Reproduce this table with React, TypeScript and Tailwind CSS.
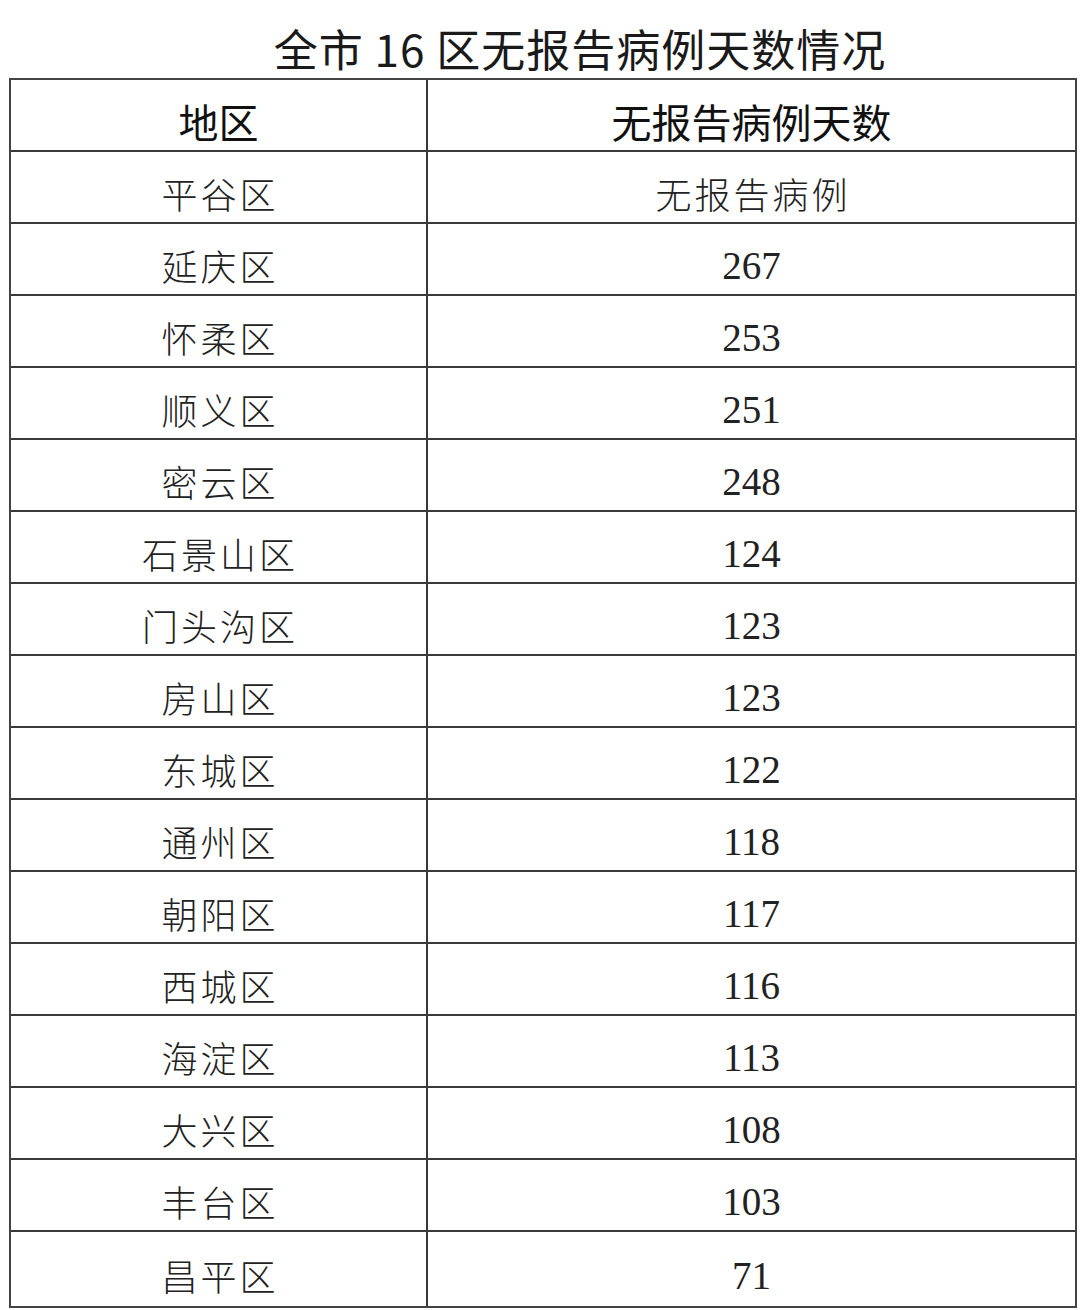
const rows: { district: string; days: string }[] = [
	{ district: "平谷区", days: "无报告病例" },
	{ district: "延庆区", days: "267" },
	{ district: "怀柔区", days: "253" },
	{ district: "顺义区", days: "251" },
	{ district: "密云区", days: "248" },
	{ district: "石景山区", days: "124" },
	{ district: "门头沟区", days: "123" },
	{ district: "房山区", days: "123" },
	{ district: "东城区", days: "122" },
	{ district: "通州区", days: "118" },
	{ district: "朝阳区", days: "117" },
	{ district: "西城区", days: "116" },
	{ district: "海淀区", days: "113" },
	{ district: "大兴区", days: "108" },
	{ district: "丰台区", days: "103" },
	{ district: "昌平区", days: "71" },
];

const cjk = "font-['Noto_Sans_CJK_SC',sans-serif]";

export default function App() {
	return (
		<div className="w-[1080px] h-[1310px] bg-white text-[#1a1a1a]">
			{/* Title */}
			<div className="flex h-[78px] items-center justify-center pl-[80px] pt-[18px]">
				<h1 className={`${cjk} text-[44px] leading-none font-normal tracking-[1px]`}>全市 16 区无报告病例天数情况</h1>
			</div>

			{/* Table */}
			<div className="mx-[9px] w-[1068px] border-2 border-[#444]">
				<div className="grid h-[72px] grid-cols-[417px_1fr] border-b-2 border-[#3a3a3a]">
					<div className={`${cjk} flex items-center justify-center border-r-2 border-[#3a3a3a] pt-[12px] text-[40px] leading-none font-normal text-[#111]`}>
						地区
					</div>
					<div className={`${cjk} flex items-center justify-center pt-[12px] text-[40px] leading-none font-normal text-[#111]`}>
						无报告病例天数
					</div>
				</div>
				{rows.map((row, i) => {
					const last = i === rows.length - 1;
					const isNumber = /^\d+$/.test(row.days);
					return (
						<div
							key={row.district}
							className={
								last
									? "grid h-[74px] grid-cols-[417px_1fr]"
									: "grid h-[72px] grid-cols-[417px_1fr] border-b-2 border-[#3a3a3a]"
							}
						>
							<div
								className={`${cjk} flex items-center justify-center border-r-2 border-[#3a3a3a] pt-[12px] pl-[3px] text-[36px] leading-none font-light tracking-[3px] text-[#222]`}
							>
								{row.district}
							</div>
							{isNumber ? (
								<div className="flex items-center justify-center pt-[12px] font-['Liberation_Serif',serif] text-[39px] leading-none text-[#222]">
									{row.days}
								</div>
							) : (
								<div
									className={`${cjk} flex items-center justify-center pt-[12px] pl-[3px] text-[36px] leading-none font-light tracking-[3px] text-[#222]`}
								>
									{row.days}
								</div>
							)}
						</div>
					);
				})}
			</div>
		</div>
	);
}
